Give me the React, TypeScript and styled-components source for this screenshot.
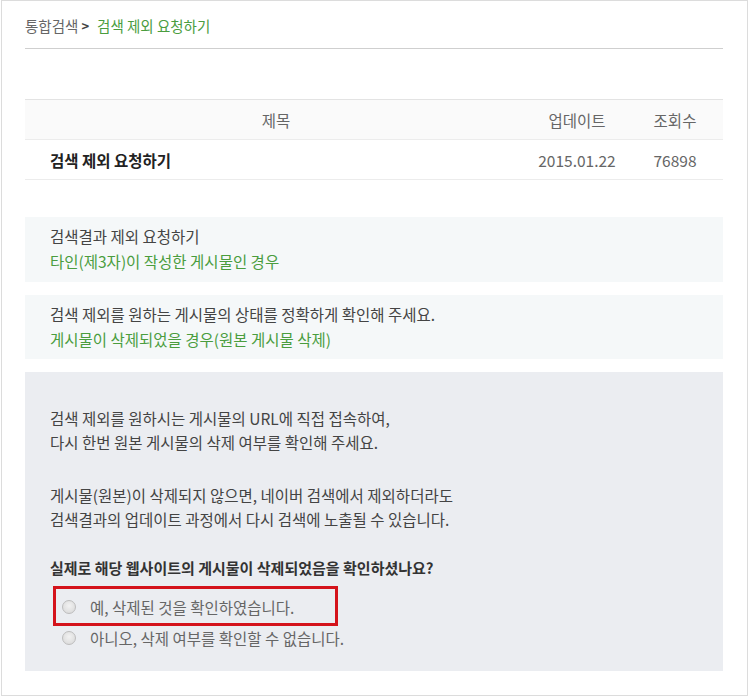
import styled, { createGlobalStyle } from "styled-components";

const GlobalStyle = createGlobalStyle`
    html, body {
        margin: 0;
        padding: 0;
        background: #ffffff;
    }

    body {
        font-family: "Noto Sans CJK KR", "Noto Sans", sans-serif;
        font-size: 15.5px;
        color: #444;
    }
`;

const Frame = styled.div`
    box-sizing: border-box;
    width: 747px;
    height: 696px;
    margin: 0 0 0 1px;
    border: 1px solid #dcdcdc;
    padding: 0 24px 0 23px;
`;

const Breadcrumb = styled.div`
    display: flex;
    align-items: center;
    height: 46px;
    padding-top: 1px;
    border-bottom: 1px solid #cfcfcf;
    font-size: 14.5px;
    color: #666;

    span.sep {
        margin: 0 8px 0 3px;
        color: #444;
        font-weight: 700;
        font-size: 13px;
    }

    span.current {
        color: #4a9d3e;
    }
`;

const Table = styled.div`
    margin-top: 50px;
    border-top: 1px solid #e3e3e3;
`;

const Row = styled.div<{ $head?: boolean }>`
    display: grid;
    grid-template-columns: 1fr 100px 96px;
    align-items: center;
    height: 39px;
    border-bottom: 1px solid #ececec;
    background: ${(p) => (p.$head ? "#fafafa" : "#fff")};
    color: #666;
`;

const Cell = styled.div`
    text-align: center;
`;

const TitleCell = styled.div`
    padding-left: 25px;
    font-weight: 700;
    color: #222;
`;

const InfoBox = styled.div`
    margin-top: 37px;
    background: #f5f8f9;
    padding: 7px 25px 8px;
    line-height: 25px;
    color: #444;

    & + & {
        margin-top: 13px;
        padding-bottom: 7px;
    }
`;

const Green = styled.div`
    color: #4a9d3e;
`;

const NoticeBox = styled.div`
    margin-top: 13px;
    background: #ebedf1;
    padding: 34px 25px 18px;
    line-height: 24px;
    color: #444;

    p {
        margin: 0;
    }

    p + p {
        margin-top: 29px;
    }
`;

const Question = styled.div`
    margin-top: 25px;
    margin-bottom: 11px;
    font-size: 15px;
    font-weight: 700;
    color: #333;
`;

const Option = styled.label<{ $marked?: boolean }>`
    position: relative;
    display: flex;
    align-items: center;
    height: 31px;
    padding-left: 12px;
    color: #666;

    ${(p) =>
        p.$marked &&
        `
        &::after {
            content: "";
            position: absolute;
            left: 3px;
            top: -5px;
            width: 285px;
            height: 40px;
            box-sizing: border-box;
            border: 3px solid #d4131b;
        }
    `}
`;

const Radio = styled.span`
    box-sizing: border-box;
    width: 14px;
    height: 14px;
    margin-right: 14px;
    border-radius: 50%;
    border: 1px solid #bdbdbd;
    background: radial-gradient(circle at 50% 40%, #f2f2f2 0%, #d6d6d6 100%);
`;

export default function App() {
    return (
        <>
            <GlobalStyle />
            <Frame>
                <Breadcrumb>
                    <span>통합검색</span>
                    <span className="sep">&gt;</span>
                    <span className="current">검색 제외 요청하기</span>
                </Breadcrumb>

                <Table>
                    <Row $head>
                        <Cell>제목</Cell>
                        <Cell>업데이트</Cell>
                        <Cell>조회수</Cell>
                    </Row>
                    <Row>
                        <TitleCell>검색 제외 요청하기</TitleCell>
                        <Cell>2015.01.22</Cell>
                        <Cell>76898</Cell>
                    </Row>
                </Table>

                <InfoBox>
                    <div>검색결과 제외 요청하기</div>
                    <Green>타인(제3자)이 작성한 게시물인 경우</Green>
                </InfoBox>
                <InfoBox>
                    <div>검색 제외를 원하는 게시물의 상태를 정확하게 확인해 주세요.</div>
                    <Green>게시물이 삭제되었을 경우(원본 게시물 삭제)</Green>
                </InfoBox>

                <NoticeBox>
                    <p>
                        검색 제외를 원하시는 게시물의 URL에 직접 접속하여,
                        <br />
                        다시 한번 원본 게시물의 삭제 여부를 확인해 주세요.
                    </p>
                    <p>
                        게시물(원본)이 삭제되지 않으면, 네이버 검색에서 제외하더라도
                        <br />
                        검색결과의 업데이트 과정에서 다시 검색에 노출될 수 있습니다.
                    </p>
                    <Question>실제로 해당 웹사이트의 게시물이 삭제되었음을 확인하셨나요?</Question>
                    <Option $marked>
                        <Radio />
                        예, 삭제된 것을 확인하였습니다.
                    </Option>
                    <Option>
                        <Radio />
                        아니오, 삭제 여부를 확인할 수 없습니다.
                    </Option>
                </NoticeBox>
            </Frame>
        </>
    );
}
